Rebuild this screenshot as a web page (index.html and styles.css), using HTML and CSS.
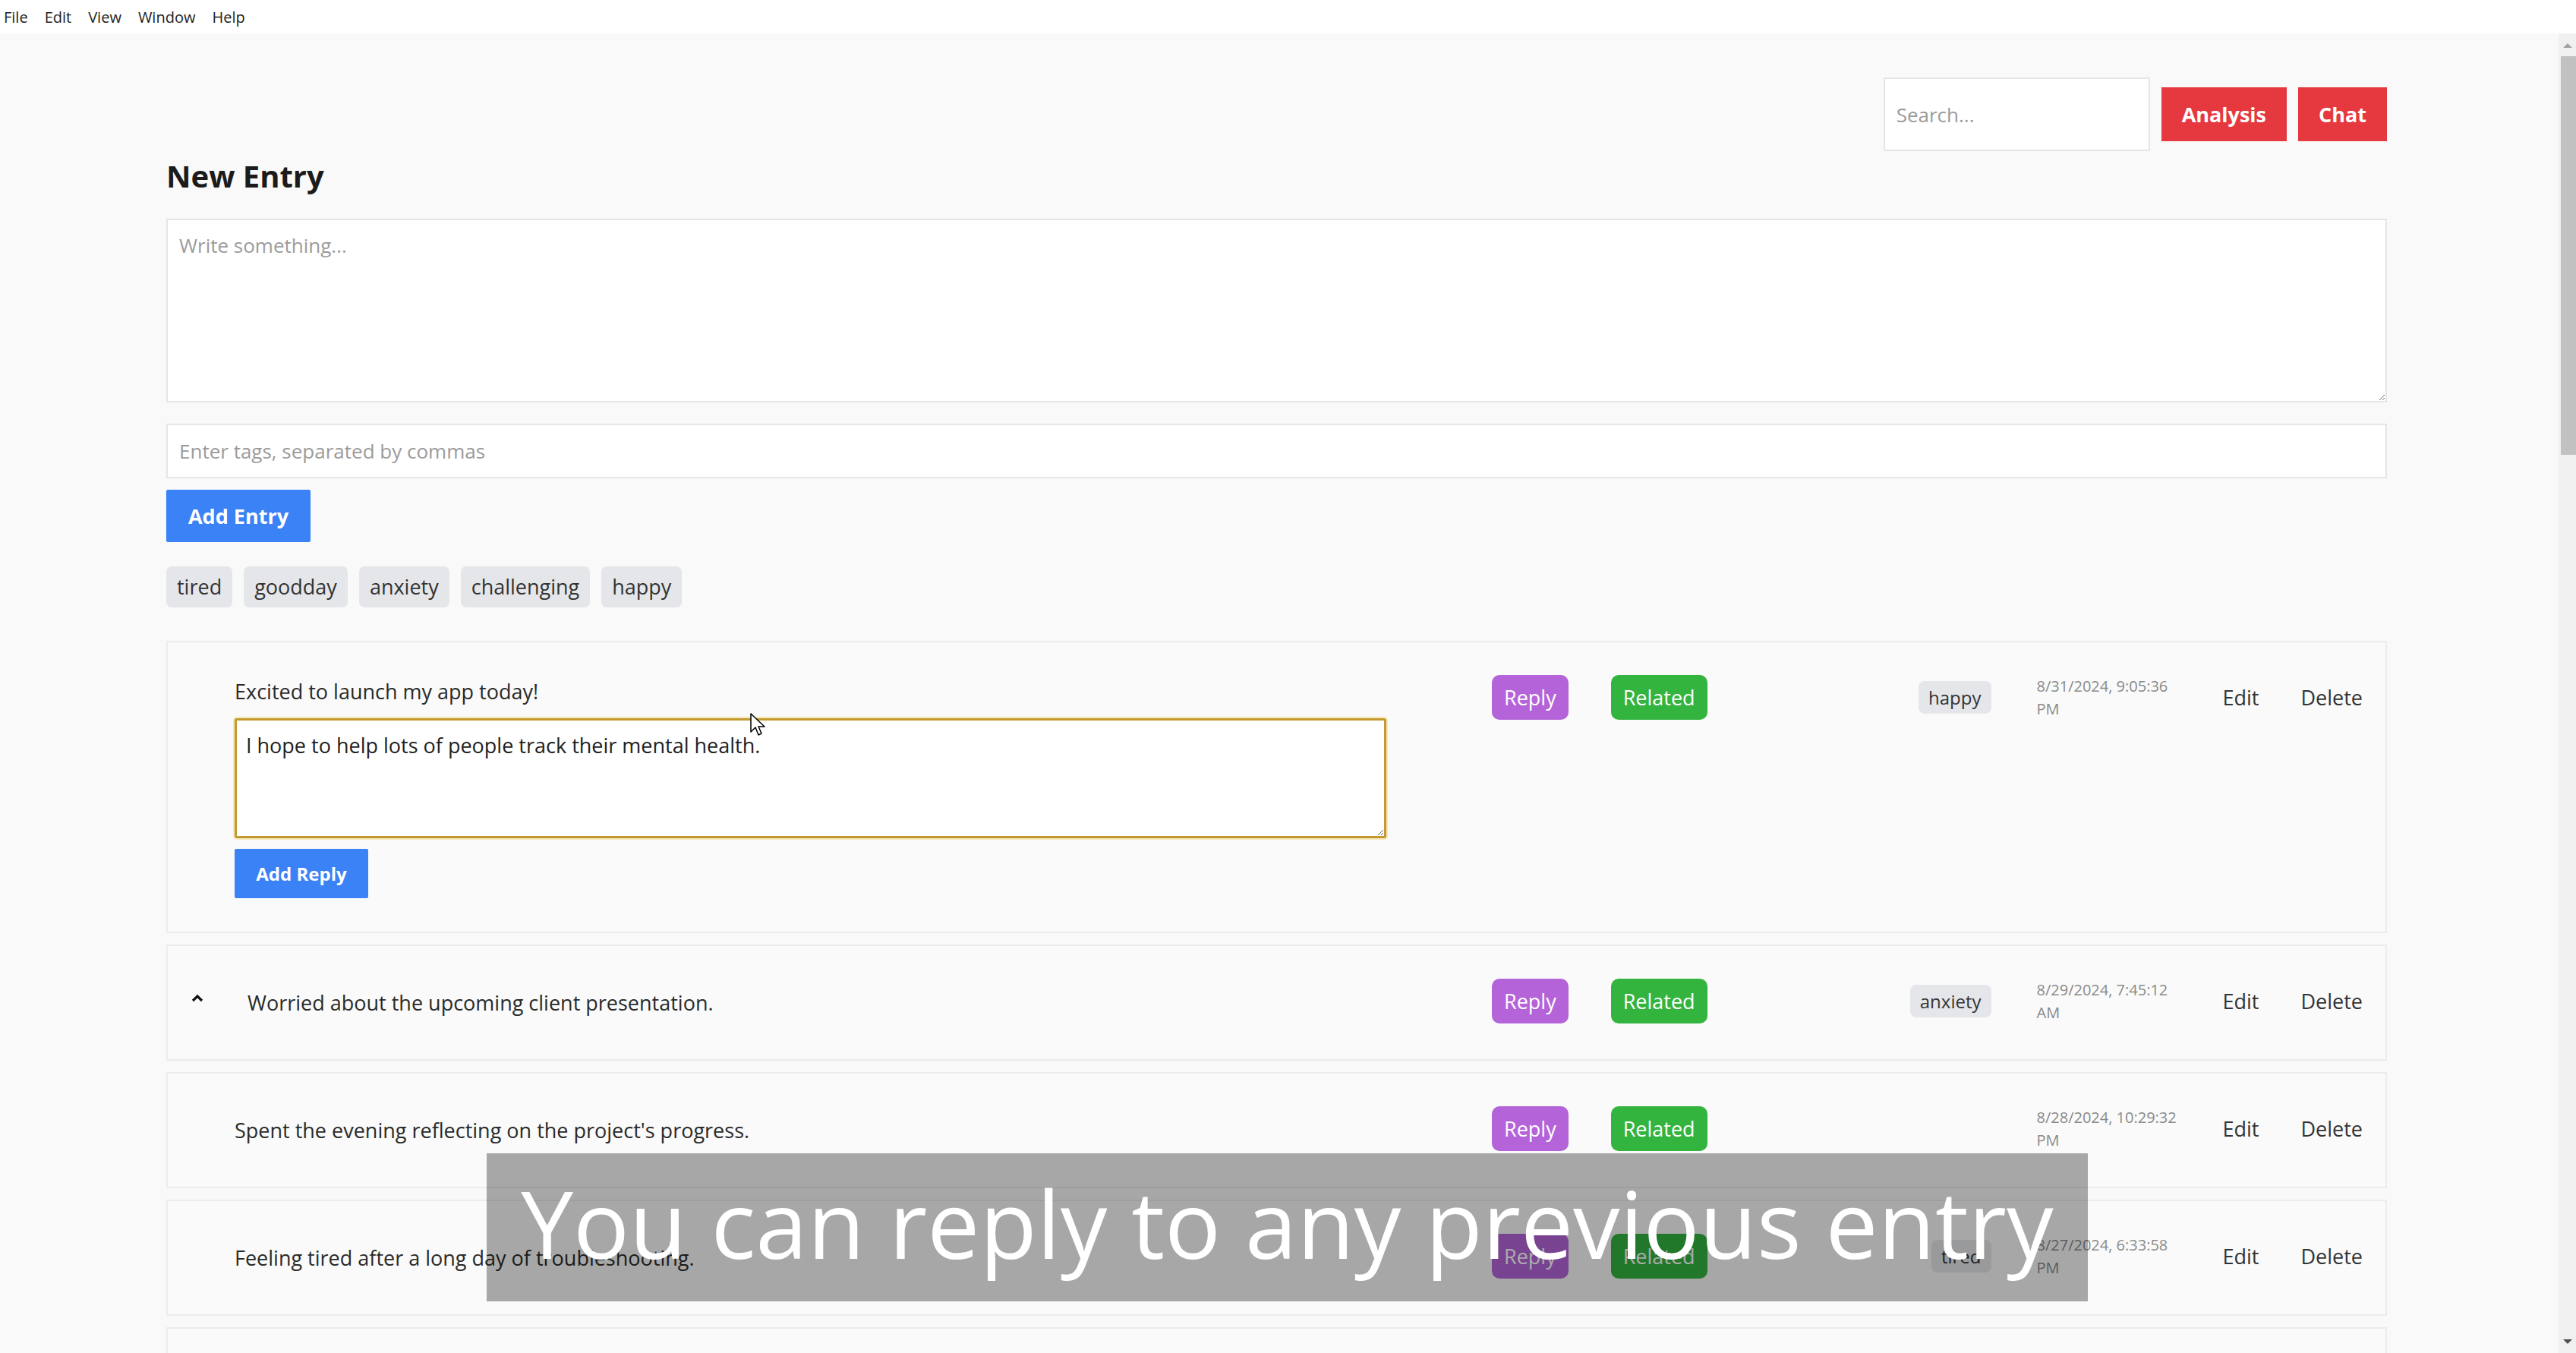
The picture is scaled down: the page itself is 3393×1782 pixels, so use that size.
FILE: index.html
```html
<!DOCTYPE html>
<html>
<head>
<meta charset="utf-8">
<title>Journal</title>
<link rel="stylesheet" href="styles.css">
</head>
<body>

<div class="menubar">
  <span>File</span>
  <span>Edit</span>
  <span>View</span>
  <span>Window</span>
  <span>Help</span>
</div>

<div class="window">
  <main class="viewport">
    <div class="container">

      <header class="topbar">
        <input class="search" type="text" placeholder="Search...">
        <button class="btn btn-red">Analysis</button>
        <button class="btn btn-red">Chat</button>
      </header>

      <h2 class="title">New Entry</h2>
      <textarea class="entry-input" placeholder="Write something..."></textarea>
      <input class="tags-input" type="text" placeholder="Enter tags, separated by commas">
      <button class="btn btn-blue add-entry">Add Entry</button>

      <div class="tag-list">
        <span class="chip">tired</span>
        <span class="chip">goodday</span>
        <span class="chip">anxiety</span>
        <span class="chip">challenging</span>
        <span class="chip">happy</span>
      </div>

      <div class="entries">

        <div class="entry">
          <div class="entry-main">
            <p class="entry-text">Excited to launch my app today!</p>
            <textarea class="reply-input">I hope to help lots of people track their mental health.</textarea>
            <button class="btn btn-blue add-reply">Add Reply</button>
          </div>
          <div class="entry-actions">
            <button class="pill pill-purple">Reply</button>
            <button class="pill pill-green">Related</button>
          </div>
          <div class="entry-meta">
            <span class="chip chip-small">happy</span>
            <span class="entry-date">8/31/2024, 9:05:36 PM</span>
            <button class="link-btn">Edit</button>
            <button class="link-btn">Delete</button>
          </div>
        </div>

        <div class="entry entry-thread">
          <div class="entry-main">
            <div class="entry-line">
              <svg class="toggle" width="16" height="11" viewBox="0 0 16 11"><path d="M2 9 L8 3 L14 9" fill="none" stroke="#111" stroke-width="3.2"/></svg>
              <p class="entry-text">Worried about the upcoming client presentation.</p>
            </div>
          </div>
          <div class="entry-actions">
            <button class="pill pill-purple">Reply</button>
            <button class="pill pill-green">Related</button>
          </div>
          <div class="entry-meta">
            <span class="chip chip-small">anxiety</span>
            <span class="entry-date">8/29/2024, 7:45:12 AM</span>
            <button class="link-btn">Edit</button>
            <button class="link-btn">Delete</button>
          </div>
        </div>

        <div class="entry">
          <div class="entry-main">
            <p class="entry-text">Spent the evening reflecting on the project's progress.</p>
          </div>
          <div class="entry-actions">
            <button class="pill pill-purple">Reply</button>
            <button class="pill pill-green">Related</button>
          </div>
          <div class="entry-meta">
            <span class="entry-date">8/28/2024, 10:29:32 PM</span>
            <button class="link-btn">Edit</button>
            <button class="link-btn">Delete</button>
          </div>
        </div>

        <div class="entry">
          <div class="entry-main">
            <p class="entry-text">Feeling tired after a long day of troubleshooting.</p>
          </div>
          <div class="entry-actions">
            <button class="pill pill-purple">Reply</button>
            <button class="pill pill-green">Related</button>
          </div>
          <div class="entry-meta">
            <span class="chip chip-small">tired</span>
            <span class="entry-date">8/27/2024, 6:33:58 PM</span>
            <button class="link-btn">Edit</button>
            <button class="link-btn">Delete</button>
          </div>
        </div>

        <div class="entry entry-more"></div>

      </div>
    </div>

    <!-- video caption over the page -->
    <div class="caption">You can reply to any previous entry</div>

    <svg class="pointer" width="20" height="32" viewBox="0 0 20 32">
      <path d="M1 1 L1 25 L7 19 L11 29 L15 27 L11 18 L19 18 Z" fill="#fff" stroke="#000" stroke-width="1.5" stroke-linejoin="round"/>
    </svg>
  </main>

  <div class="scrollbar">
    <div class="scroll-arrow">
      <svg width="12" height="7" viewBox="0 0 12 7"><path d="M0 7 L6 1 L12 7 Z" fill="#a3a3a3"/></svg>
    </div>
    <div class="scroll-thumb"></div>
    <div class="scroll-track"></div>
    <div class="scroll-arrow">
      <svg width="12" height="7" viewBox="0 0 12 7"><path d="M0 0 L6 6 L12 0 Z" fill="#505050"/></svg>
    </div>
  </div>
</div>

</body>
</html>
```

FILE: styles.css
```css
* { box-sizing: border-box; }

html, body {
  margin: 0;
  height: 100%;
}

body {
  display: flex;
  flex-direction: column;
  overflow: hidden;
  font-family: "Segoe UI", "Open Sans", sans-serif;
  color: #222;
  background: #f8f9f8;
}

/* Menu */

.menubar {
  flex: 0 0 44px;
  display: flex;
  align-items: center;
  gap: 22px;
  padding-left: 5px;
  background: #fff;
  font-size: 20px;
  color: #1e1e1e;
}

.window {
  flex: 1;
  display: flex;
  min-height: 0;
}

.viewport {
  flex: 1;
  position: relative;
  overflow: hidden;
}

.container {
  width: 2925px;
  margin-left: 219px;
  padding-top: 58px;
}

/* Header */

.topbar {
  display: flex;
  justify-content: flex-end;
  align-items: center;
  gap: 15px;
}

.search {
  width: 351px;
  height: 97px;
  padding: 0 15px;
  border: 2px solid #e4e5e4;
  background: #fff;
  font-family: inherit;
  font-size: 26px;
}

.search::placeholder,
.entry-input::placeholder,
.tags-input::placeholder { color: #9b9b9b; }

.btn {
  border: 0;
  font-family: inherit;
  font-weight: 700;
  color: #fff;
  cursor: pointer;
}

.btn-red {
  height: 71px;
  padding: 0 27px;
  background: #e5383f;
  font-size: 27px;
}

.btn-blue { background: #3b82f6; border-radius: 2px; }

.title {
  margin: 8px 0 31px;
  font-size: 40px;
  line-height: 50px;
  font-weight: 700;
  color: #1b1b1b;
}

.entry-input {
  display: block;
  width: 100%;
  height: 242px;
  padding: 14px 15px;
  border: 2px solid #e4e5e4;
  background: #fff;
  font-family: inherit;
  font-size: 26px;
  line-height: 38px;
}

.tags-input {
  display: block;
  width: 100%;
  height: 72px;
  margin-top: 28px;
  padding: 0 15px;
  border: 2px solid #e4e5e4;
  background: #fff;
  font-family: inherit;
  font-size: 26px;
}

.add-entry {
  display: block;
  width: 190px;
  height: 69px;
  margin-top: 15px;
  font-size: 27px;
}

.tag-list {
  display: flex;
  gap: 15px;
  margin-top: 32px;
}

.chip {
  padding: 0 14px;
  border-radius: 7px;
  background: #e5e6e9;
  color: #333;
  font-size: 27px;
  line-height: 54px;
}

/* Entries */

.entries {
  display: flex;
  flex-direction: column;
  gap: 15px;
  margin-top: 44px;
}

.entry {
  display: flex;
  align-items: flex-start;
  padding: 40px 30px 44px 88px;
  border: 2px solid #ebeceb;
  background: #f9faf9;
}

.entry-thread { padding-left: 31px; }

.entry-more { height: 152px; }

.entry-main {
  flex: 1;
  min-width: 0;
  min-height: 65px;
  padding-top: 4px;
  display: flex;
  flex-direction: column;
  justify-content: center;
}

.entry-line {
  display: flex;
  align-items: center;
  gap: 58px;
}

.toggle { margin-top: -12px; }

.entry-text {
  margin: 0;
  font-size: 27px;
  line-height: 42px;
  color: #2a2a2a;
}

.reply-input {
  width: 1517px;
  height: 158px;
  margin-top: 14px;
  padding: 14px 12px;
  border: 3px solid #c49a30;
  border-radius: 3px;
  box-shadow: 0 0 0 2px #f6e9b9;
  outline: none;
  background: #fff;
  font-family: inherit;
  font-size: 27px;
  line-height: 38px;
  color: #222;
}

.add-reply {
  align-self: flex-start;
  width: 176px;
  height: 65px;
  margin-top: 14px;
  font-size: 24px;
}

.entry-actions {
  flex: 0 0 540px;
  height: 65px;
  display: flex;
  align-items: center;
  gap: 56px;
}

.pill {
  height: 59px;
  padding: 0 16px;
  border: 0;
  border-radius: 10px;
  color: #fff;
  font-family: inherit;
  font-size: 27px;
}

.pill-purple { background: #b464d8; }
.pill-green { background: #33b43f; }

.entry-meta {
  flex: 0 0 607px;
  height: 65px;
  display: flex;
  align-items: center;
  justify-content: flex-end;
  gap: 55px;
}

.chip-small {
  margin-right: 5px;
  padding: 0 13px;
  border-radius: 8px;
  font-size: 24px;
  line-height: 43px;
}

.entry-date {
  width: 190px;
  font-size: 20px;
  line-height: 30px;
  color: #8a8a8a;
}

.link-btn {
  padding: 0;
  border: 0;
  background: none;
  font-family: inherit;
  font-size: 27px;
  color: #333;
}

/* Caption + pointer */

.caption {
  position: absolute;
  left: 641px;
  top: 1475px;
  width: 2109px;
  height: 195px;
  background: rgba(0, 0, 0, 0.33);
  color: #fff;
  font-family: "Open Sans", sans-serif;
  font-size: 123px;
  line-height: 184px;
  text-align: center;
  white-space: nowrap;
}

.pointer {
  position: absolute;
  left: 988px;
  top: 895px;
}

/* Scrollbar */

.scrollbar {
  flex: 0 0 23px;
  display: flex;
  flex-direction: column;
  background: #f0f0f0;
}

.scroll-arrow {
  flex: 0 0 30px;
  display: flex;
  align-items: center;
  justify-content: center;
}

.scroll-thumb {
  flex: 0 0 525px;
  margin-left: 3px;
  background: #c1c1c1;
}

.scroll-track { flex: 1; }
```
